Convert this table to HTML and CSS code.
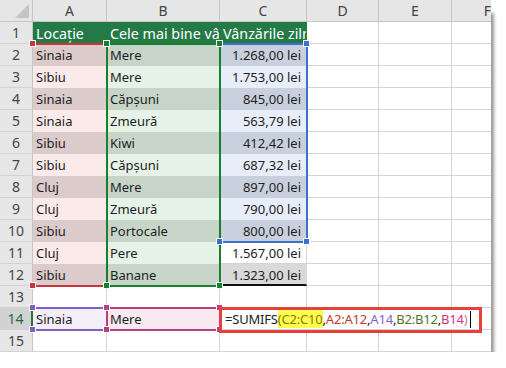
FILE: index.html
```html
<!DOCTYPE html>
<html lang="ro">
<head>
<meta charset="utf-8">
<title>SUMIFS</title>
<link rel="stylesheet" href="styles.css">
</head>
<body>
<div class="sheet">
  <div class="grid">
    <div class="corner"><span class="tri"></span></div>
    <div class="ch">A</div><div class="ch">B</div><div class="ch">C</div><div class="ch">D</div><div class="ch">E</div><div class="ch">F</div>

    <div class="rh">1</div><div class="c hd">Locație</div><div class="c hd">Cele mai bine vândute</div><div class="c hd">Vânzările zilnice</div><div class="c"></div><div class="c"></div><div class="c"></div>
    <div class="rh">2</div><div class="c a1">Sinaia</div><div class="c b1">Mere</div><div class="c c1 num">1.268,00 lei</div><div class="c"></div><div class="c"></div><div class="c"></div>
    <div class="rh">3</div><div class="c a2">Sibiu</div><div class="c b2">Mere</div><div class="c c2 num">1.753,00 lei</div><div class="c"></div><div class="c"></div><div class="c"></div>
    <div class="rh">4</div><div class="c a1">Sinaia</div><div class="c b1">Căpșuni</div><div class="c c1 num">845,00 lei</div><div class="c"></div><div class="c"></div><div class="c"></div>
    <div class="rh">5</div><div class="c a2">Sinaia</div><div class="c b2">Zmeură</div><div class="c c2 num">563,79 lei</div><div class="c"></div><div class="c"></div><div class="c"></div>
    <div class="rh">6</div><div class="c a1">Sibiu</div><div class="c b1">Kiwi</div><div class="c c1 num">412,42 lei</div><div class="c"></div><div class="c"></div><div class="c"></div>
    <div class="rh">7</div><div class="c a2">Sibiu</div><div class="c b2">Căpșuni</div><div class="c c2 num">687,32 lei</div><div class="c"></div><div class="c"></div><div class="c"></div>
    <div class="rh">8</div><div class="c a1">Cluj</div><div class="c b1">Mere</div><div class="c c1 num">897,00 lei</div><div class="c"></div><div class="c"></div><div class="c"></div>
    <div class="rh">9</div><div class="c a2">Cluj</div><div class="c b2">Zmeură</div><div class="c c2 num">790,00 lei</div><div class="c"></div><div class="c"></div><div class="c"></div>
    <div class="rh">10</div><div class="c a1">Sibiu</div><div class="c b1">Portocale</div><div class="c c1 num">800,00 lei</div><div class="c"></div><div class="c"></div><div class="c"></div>
    <div class="rh">11</div><div class="c a2">Cluj</div><div class="c b2">Pere</div><div class="c num">1.567,00 lei</div><div class="c"></div><div class="c"></div><div class="c"></div>
    <div class="rh">12</div><div class="c a1">Sibiu</div><div class="c b1">Banane</div><div class="c gray num total">1.323,00 lei</div><div class="c"></div><div class="c"></div><div class="c"></div>
    <div class="rh">13</div><div class="c"></div><div class="c"></div><div class="c"></div><div class="c"></div><div class="c"></div><div class="c"></div>
    <div class="rh active">14</div><div class="c crit1">Sinaia</div><div class="c crit2">Mere</div><div class="c formula">=SUMIFS<span class="hl">(C2:C10</span>,<span class="r-a">A2:A12</span>,<span class="r-p">A14</span>,<span class="r-g">B2:B12</span>,<span class="r-m">B14</span><span class="r-end">)</span><span class="caret"></span></div>
    <div class="rh">15</div><div class="c"></div><div class="c"></div><div class="c"></div><div class="c"></div><div class="c"></div><div class="c"></div>

    <div class="rng rng-a"></div>
    <div class="rng rng-b"></div>
    <div class="rng rng-c"></div>
    <div class="rng rng-a14"></div>
    <div class="rng rng-b14"></div>

    <span class="hdl red at-a2 tl"></span>
    <span class="hdl red at-a12 bl"></span>
    <span class="hdl blue at-c2 tr"></span>
    <span class="hdl blue at-c10 bl"></span>
    <span class="hdl blue at-c10 br"></span>
    <span class="hdl green at-b2 tl"></span>
    <span class="hdl green at-b2 tr"></span>
    <span class="hdl green at-b12 bl"></span>
    <span class="hdl green at-b12 br"></span>
    <span class="hdl purple at-a14 tl"></span>
    <span class="hdl purple at-a14 bl"></span>
    <span class="hdl magenta at-b14 tl"></span>
    <span class="hdl magenta at-b14 bl"></span>
    <span class="hdl magenta at-b14 tr"></span>
    <span class="hdl magenta at-b14 br"></span>

    <div class="callout"></div>
  </div>
</div>
</body>
</html>
```
FILE: styles.css
```css
html, body {
  margin: 0;
  background: #ffffff;
}
body {
  font-family: "Noto Sans", "Open Sans", sans-serif;
}
.sheet {
  width: 491px;
  height: 352px;
  overflow: hidden;
  box-shadow: 8px 8px 3px -5px rgba(0, 0, 0, 0.4);
}
.grid {
  position: relative;
  display: grid;
  grid-template-columns: 33px 74px 113px 87px 72px 73px 72px;
  grid-template-rows: repeat(16, 22px);
  width: 524px;
}
.corner {
  background: #e6e6e6;
  border-right: 1px solid #c6c6c6;
  border-bottom: 1px solid #c6c6c6;
  box-sizing: border-box;
  position: relative;
}
.tri {
  position: absolute;
  right: 3px;
  bottom: 3px;
  width: 0;
  height: 0;
  border-left: 14px solid transparent;
  border-bottom: 14px solid #c4c4c4;
}
.ch {
  box-sizing: border-box;
  background: #e6e6e6;
  border-right: 1px solid #c6c6c6;
  border-bottom: 1px solid #c6c6c6;
  text-align: center;
  font-size: 14px;
  line-height: 21px;
  color: #444;
}
.rh {
  box-sizing: border-box;
  background: #e6e6e6;
  border-right: 1px solid #c6c6c6;
  border-bottom: 1px solid #d2d2d2;
  text-align: center;
  font-size: 14px;
  line-height: 21px;
  color: #444;
}
.rh.active {
  background: #d2d2d2;
  border-right: 2px solid #217346;
  color: #1d6b3f;
}
.c {
  box-sizing: border-box;
  border-right: 1px solid #d4d4d4;
  border-bottom: 1px solid #d4d4d4;
  font-size: 13px;
  line-height: 21px;
  padding: 1px 0 0 3px;
  white-space: nowrap;
  overflow: hidden;
  color: #1e1e1e;
}
.num {
  text-align: right;
  padding: 1px 5px 0 0;
}
.hd {
  background: #237a47;
  border-color: #237a47;
  color: #ffffff;
  font-size: 14.3px;
  padding-right: 0;
}
.a1 { background: #dccbcb; border-color: #dccbcb; }
.a2 { background: #fbeaea; border-color: #fbeaea; }
.b1 { background: #c7d5c9; border-color: #c7d5c9; }
.b2 { background: #e6f2e7; border-color: #e6f2e7; }
.c1 { background: #c9d0dd; border-color: #c9d0dd; }
.c2 { background: #e8eef9; border-color: #e8eef9; }
.gray { background: #d9d9d9; border-right-color: #d9d9d9; }
.total { border-bottom: 2px solid #111; }
.crit1 { background: #f4eef9; border-color: #f4eef9; }
.crit2 { background: #f9eaf2; border-color: #f9eaf2; }
.formula {
  grid-column: 4 / 8;
  padding-left: 5px;
  color: #222;
  letter-spacing: -0.2px;
}
.hl { background: #ffff4d; color: #8a7800; }
.r-a { color: #c0392b; }
.r-p { color: #8a5ad4; }
.r-g { color: #4f7a2a; }
.r-m { color: #d9327f; }
.r-end { color: #c07aa0; }
.caret {
  display: inline-block;
  width: 1px;
  height: 17px;
  background: #000;
  margin-left: 3px;
  vertical-align: -4px;
}

/* range outlines (overlays) */
.rng {
  position: absolute;
  pointer-events: none;
}
.rng-a {
  grid-column: 2 / 3;
  grid-row: 3 / 14;
  left: 0;
  right: 0;
  top: -1px;
  bottom: -1px;
  border-top: 2px solid #c9353b;
  border-bottom: 2px solid #c9353b;
}
.rng-b {
  grid-column: 3 / 4;
  grid-row: 3 / 14;
  left: -1px;
  right: -1px;
  top: -1px;
  bottom: -1px;
  border: 2px solid #17802f;
}
.rng-c {
  grid-column: 4 / 5;
  grid-row: 3 / 12;
  left: -1px;
  right: -1px;
  top: -1px;
  bottom: -1px;
  border: 2px solid #3d6fcb;
  border-left-color: transparent;
}
.rng-a14 {
  grid-column: 2 / 3;
  grid-row: 15 / 16;
  left: 0;
  right: 0;
  top: -1px;
  bottom: -1px;
  border-top: 2px solid #7e5fc4;
  border-bottom: 2px solid #7e5fc4;
}
.rng-b14 {
  grid-column: 3 / 4;
  grid-row: 15 / 16;
  left: -1px;
  right: -1px;
  top: -1px;
  bottom: -1px;
  border: 2px solid #b4427e;
}
.callout {
  position: absolute;
  grid-column: 4 / 7;
  grid-row: 15 / 16;
  left: -1px;
  right: -30px;
  top: -1px;
  bottom: -3px;
  border: 3px solid #e5403b;
}

/* corner handles */
.hdl {
  position: absolute;
  box-sizing: border-box;
  width: 7px;
  height: 7px;
  border: 1px solid #fff;
}
.hdl.tl { left: -4px; top: -4px; }
.hdl.tr { right: -3px; top: -4px; }
.hdl.bl { left: -4px; bottom: -3px; }
.hdl.br { right: -3px; bottom: -3px; }
.red { background: #c9353b; }
.green { background: #17802f; }
.blue { background: #3d6fcb; }
.purple { background: #7e5fc4; }
.magenta { background: #b4427e; }
.at-a2 { grid-column: 2 / 3; grid-row: 3 / 4; }
.at-a12 { grid-column: 2 / 3; grid-row: 13 / 14; }
.at-b2 { grid-column: 3 / 4; grid-row: 3 / 4; }
.at-b12 { grid-column: 3 / 4; grid-row: 13 / 14; }
.at-c2 { grid-column: 4 / 5; grid-row: 3 / 4; }
.at-c10 { grid-column: 4 / 5; grid-row: 11 / 12; }
.at-a14 { grid-column: 2 / 3; grid-row: 15 / 16; }
.at-b14 { grid-column: 3 / 4; grid-row: 15 / 16; }
```
